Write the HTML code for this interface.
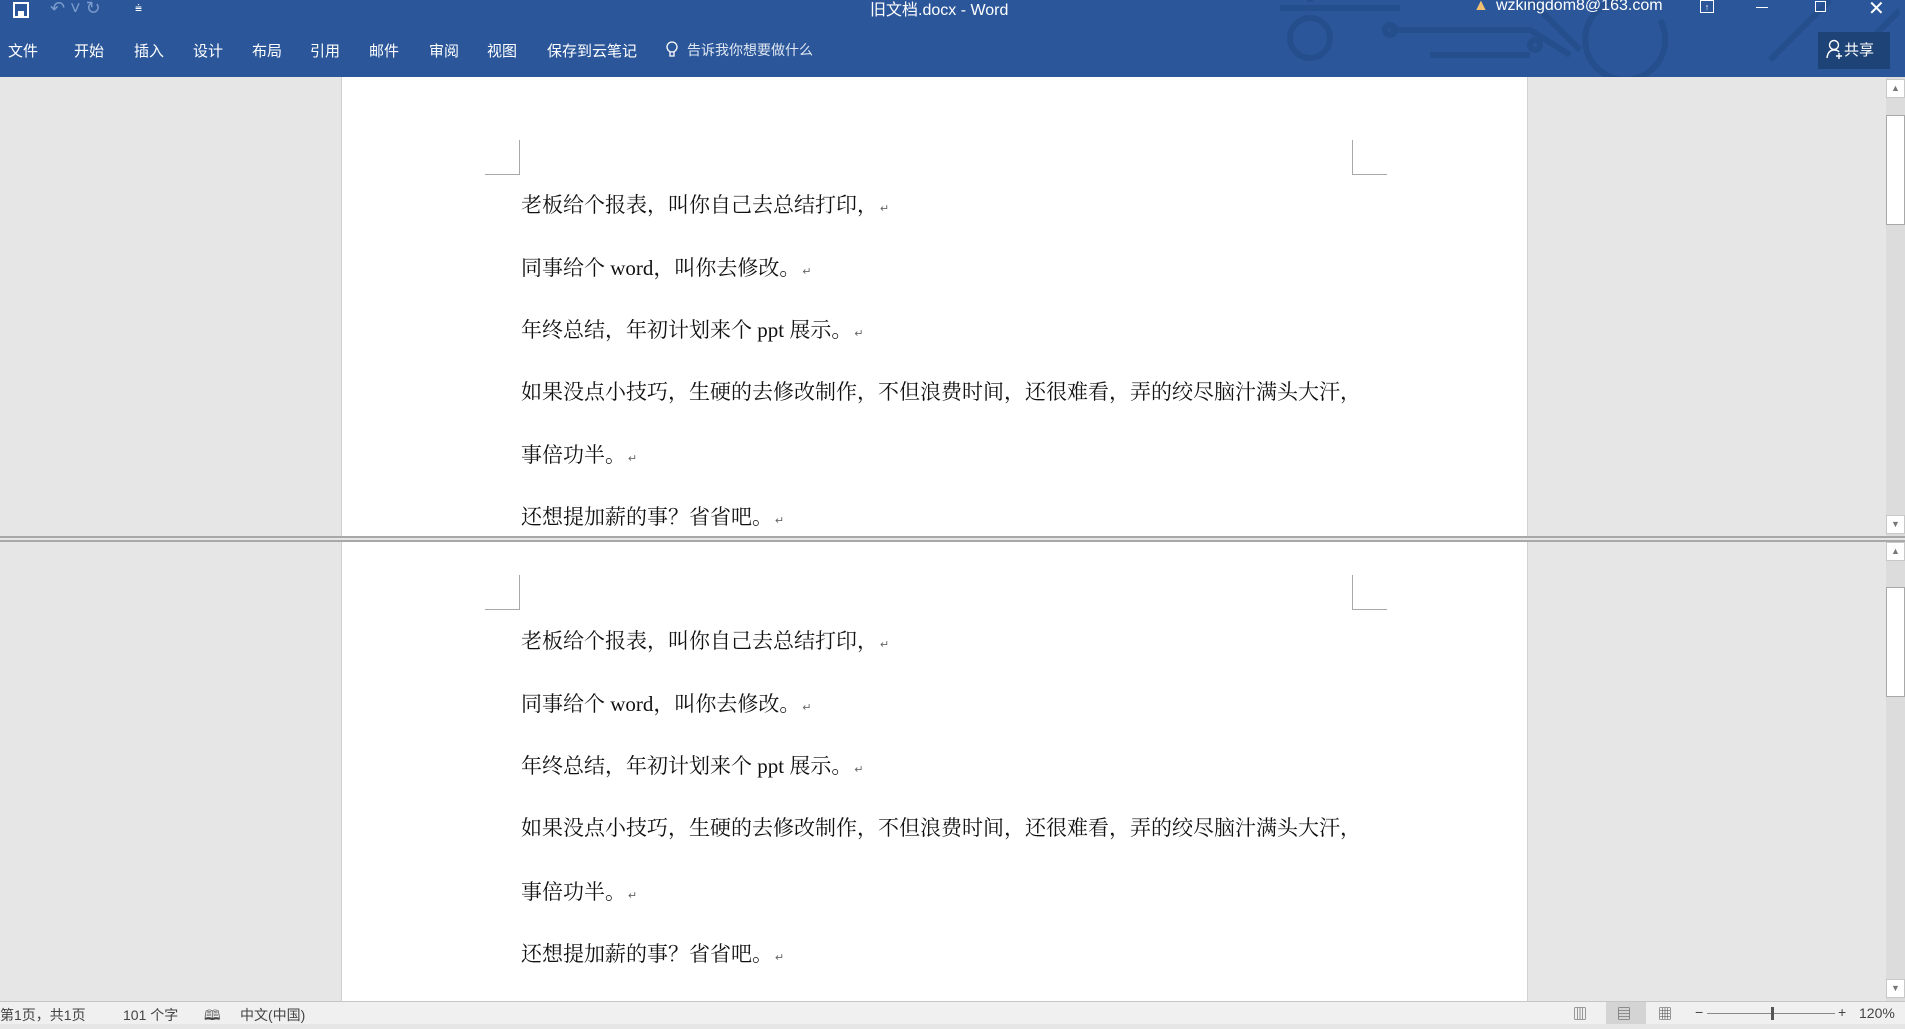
<!DOCTYPE html>
<html><head><meta charset="utf-8"><style>
*{margin:0;padding:0;box-sizing:border-box}
body{width:1905px;height:1024px;overflow:hidden;background:#e6e6e6;font-family:"Liberation Sans","Noto Sans CJK SC",sans-serif;position:relative}
.top{position:absolute;left:0;top:0;width:1905px;height:77px;background:#2b579a;color:#fff;overflow:hidden}
.a{position:absolute;white-space:nowrap}
.tab{position:absolute;top:40px;font-size:15px;color:#fff}
.pane{position:absolute;left:0;width:1886px;background:#e6e6e6;overflow:hidden}
.page{position:absolute;left:341px;width:1187px;background:#fff;border-left:1px solid #d0d0d0;border-right:1px solid #d0d0d0}
.ln{position:absolute;left:179px;font-family:"Liberation Serif","Noto Serif CJK SC",serif;font-size:21px;color:#111;white-space:nowrap;line-height:24px}
.ln i{font-style:normal;font-size:11px;color:#666;margin-left:2px}
.cl{position:absolute;border-color:#a8a8a8;border-style:solid;width:35px;height:35px}
.sb{position:absolute;left:1886px;width:19px;background:#dcdcdc}
.btn{position:absolute;left:0;width:19px;height:19px;background:#fff;border:1px solid #c8c8c8;font-size:9px;color:#777;text-align:center;line-height:17px}
.th{position:absolute;left:0;width:19px;background:#fff;border:1px solid #a8a8a8}
.st{position:absolute;left:0;top:1001px;width:1905px;height:23px;background:#f0f0f0;border-top:1px solid #c6c6c6;font-size:14px;color:#444}
</style></head><body>
<div class="top">
<svg class="a" style="left:1280px;top:0" width="620" height="77" fill="none" stroke="#244e8c" stroke-width="6">
<circle cx="30" cy="38" r="20"/><path d="M30 0 L30 2 M0 8 L120 8 M110 30 L250 30 L290 55 M150 55 L250 55 M250 0 L300 50 M340 0 A40 40 0 1 0 380 20 M550 0 L490 60 M620 10 L570 60"/><circle cx="110" cy="30" r="5"/><circle cx="255" cy="45" r="5"/>
</svg>
<svg class="a" style="left:12px;top:1px" width="18" height="18"><rect x="2" y="2" width="14" height="14" fill="none" stroke="#fff" stroke-width="2"/><rect x="6" y="10" width="6" height="6" fill="#fff"/></svg>
<div class="a" style="left:50px;top:-2px;font-size:18px;color:#7b9ccc">↶ ˅ ↻</div>
<div class="a" style="left:135px;top:1px;font-size:12px">⩧</div>
<div class="a" style="left:870px;top:-4px;font-size:16px">旧文档.docx - Word</div>
<div class="a" style="left:1473px;top:-3px;font-size:16px;color:#f0c070">▲</div>
<div class="a" style="left:1496px;top:-3px;font-size:16px">wzkingdom8@163.com</div>
<div class="a" style="left:1700px;top:0px;width:14px;height:13px;border:1px solid #fff;font-size:9px;text-align:center;line-height:12px">↑</div>
<div class="a" style="left:1756px;top:7px;width:12px;height:1px;background:#fff"></div>
<div class="a" style="left:1815px;top:1px;width:11px;height:11px;border:1px solid #fff"></div>
<div class="a" style="left:1868px;top:-4px;font-size:20px">✕</div>
<div class="tab" style="left:8px">文件</div><div class="tab" style="left:74px">开始</div><div class="tab" style="left:134px">插入</div><div class="tab" style="left:193px">设计</div><div class="tab" style="left:252px">布局</div><div class="tab" style="left:310px">引用</div><div class="tab" style="left:369px">邮件</div><div class="tab" style="left:429px">审阅</div><div class="tab" style="left:487px">视图</div><div class="tab" style="left:547px">保存到云笔记</div>
<svg class="a" style="left:665px;top:40px" width="14" height="20" fill="none" stroke="#fff" stroke-width="1.3"><circle cx="7" cy="7" r="5"/><path d="M5 12 L5 16 L9 16 L9 12"/></svg>
<div class="tab" style="left:687px;font-size:14px;color:#dfe6f2">告诉我你想要做什么</div>
<div class="a" style="left:1818px;top:32px;width:72px;height:37px;background:#1e4376;font-size:15px;line-height:37px;padding-left:8px">
<svg style="vertical-align:-4px" width="18" height="20" fill="none" stroke="#fff" stroke-width="1.4"><circle cx="8" cy="6" r="4.5"/><path d="M1 19 Q2 11 8 11 Q12 11 13 13 M13 14 L13 20 M10 17 L16 17"/></svg>共享</div>
</div>

<div class="pane" style="top:77px;height:459px">
<div class="page" style="top:0;height:460px">
<div class="cl" style="left:143px;top:63px;border-width:0 1px 1px 0"></div>
<div class="cl" style="left:1010px;top:63px;border-width:0 0 1px 1px"></div>
<div class="ln" style="top:116px">老板给个报表，叫你自己去总结打印，<i>↵</i></div>
<div class="ln" style="top:179px">同事给个 word，叫你去修改。<i>↵</i></div>
<div class="ln" style="top:241px">年终总结，年初计划来个 ppt 展示。<i>↵</i></div>
<div class="ln" style="top:303px">如果没点小技巧，生硬的去修改制作，不但浪费时间，还很难看，弄的绞尽脑汁满头大汗，</div>
<div class="ln" style="top:366px">事倍功半。<i>↵</i></div>
<div class="ln" style="top:428px">还想提加薪的事？省省吧。<i>↵</i></div>
</div></div>
<div class="sb" style="top:77px;height:459px"><div class="btn" style="top:2px">▲</div><div class="th" style="top:38px;height:110px"></div><div class="btn" style="top:438px">▼</div></div>
<div class="a" style="left:0;top:536px;width:1905px;height:6px;border-top:2px solid #a8a8a8;border-bottom:2px solid #a8a8a8;background:#e6e6e6"></div>

<div class="pane" style="top:542px;height:459px">
<div class="page" style="top:0;height:460px">
<div class="cl" style="left:143px;top:33px;border-width:0 1px 1px 0"></div>
<div class="cl" style="left:1010px;top:33px;border-width:0 0 1px 1px"></div>
<div class="ln" style="top:87px">老板给个报表，叫你自己去总结打印，<i>↵</i></div>
<div class="ln" style="top:150px">同事给个 word，叫你去修改。<i>↵</i></div>
<div class="ln" style="top:212px">年终总结，年初计划来个 ppt 展示。<i>↵</i></div>
<div class="ln" style="top:274px">如果没点小技巧，生硬的去修改制作，不但浪费时间，还很难看，弄的绞尽脑汁满头大汗，</div>
<div class="ln" style="top:338px">事倍功半。<i>↵</i></div>
<div class="ln" style="top:400px">还想提加薪的事？省省吧。<i>↵</i></div>
</div></div>
<div class="sb" style="top:542px;height:459px"><div class="btn" style="top:0">▲</div><div class="th" style="top:45px;height:110px"></div><div class="btn" style="top:437px">▼</div></div>

<div class="st">
<div class="a" style="left:0;top:3px">第1页，共1页</div>
<div class="a" style="left:123px;top:3px">101 个字</div>
<div class="a" style="left:204px;top:3px">🕮</div>
<div class="a" style="left:240px;top:3px">中文(中国)</div>
<div class="a" style="left:1573px;top:2px">▥</div>
<div class="a" style="left:1606px;top:0;width:40px;height:22px;background:#d4d4d4"></div>
<div class="a" style="left:1617px;top:2px">▤</div>
<div class="a" style="left:1658px;top:2px">▦</div>
<div class="a" style="left:1695px;top:2px">−</div>
<div class="a" style="left:1707px;top:11px;width:128px;height:1px;background:#888"></div>
<div class="a" style="left:1771px;top:5px;width:3px;height:13px;background:#555"></div>
<div class="a" style="left:1838px;top:2px">+</div>
<div class="a" style="left:1859px;top:3px">120%</div>
</div>
</body></html>
